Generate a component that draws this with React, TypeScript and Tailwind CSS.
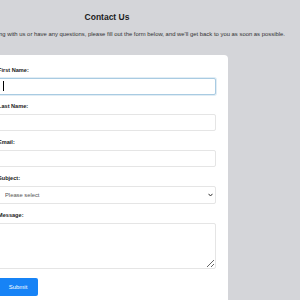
import React from "react";

const Label = ({ children }: { children: React.ReactNode }) => (
  <label className="block text-[5.6px] leading-[7px] font-bold text-[#222] mb-[4px]">{children}</label>
);

export default function App() {
  return (
    <div
      className="min-h-screen bg-[#d4d5d9] overflow-hidden"
      style={{ fontFamily: '"Liberation Sans", Arial, sans-serif' }}
    >
      <div className="w-[214px] flex flex-col items-center pt-[12px]">
        <h1 className="text-[8.5px] leading-[10px] font-bold text-[#1c1c1c]">Contact Us</h1>
        <p className="mt-[9px] whitespace-nowrap text-[5.9px] leading-[7px] text-[#333]">
          If you're interested in working with us or have any questions, please fill out the form below, and we'll get back to you as soon as possible.
        </p>
        <div className="mt-[17px] w-[242px] shrink-0 bg-white rounded-[4px] px-[12px] pt-[12px] pb-[12px]">
          <div className="mb-[8px]">
            <Label>First Name:</Label>
            <div className="relative">
              <input
                type="text"
                className="block w-full h-[17px] rounded-[2px] border border-[#a9cbe2] bg-white outline-none shadow-[0_0_0_1px_rgba(169,203,226,0.35)]"
              />
              <span className="absolute left-[5px] top-[3px] w-[1px] h-[10px] bg-black" />
            </div>
          </div>
          <div className="mb-[8px]">
            <Label>Last Name:</Label>
            <input type="text" className="block w-full h-[17px] rounded-[2px] border border-[#e5e5e5] bg-white outline-none" />
          </div>
          <div className="mb-[8px]">
            <Label>Email:</Label>
            <input type="email" className="block w-full h-[17px] rounded-[2px] border border-[#e5e5e5] bg-white outline-none" />
          </div>
          <div className="mb-[8px]">
            <Label>Subject:</Label>
            <div className="relative">
              <select
                defaultValue=""
                className="block w-full h-[18px] appearance-none rounded-[2px] border border-[#e5e5e5] bg-white pl-[6px] text-[5.8px] text-[#555] outline-none"
              >
                <option value="">Please select</option>
              </select>
              <svg
                className="absolute right-[3px] top-[7px] pointer-events-none"
                width="5"
                height="4"
                viewBox="0 0 5 4"
              >
                <path d="M0.5 0.8 L2.5 3 L4.5 0.8" fill="none" stroke="#333" strokeWidth="1" />
              </svg>
            </div>
          </div>
          <div className="mb-[9px]">
            <Label>Message:</Label>
            <textarea className="block w-full h-[46px] rounded-[2px] border border-[#e5e5e5] bg-white outline-none" />
          </div>
          <button className="block w-[40px] h-[18px] rounded-[2px] bg-[#1783f6] text-white text-[6px] leading-[18px]">
            Submit
          </button>
        </div>
      </div>
    </div>
  );
}
